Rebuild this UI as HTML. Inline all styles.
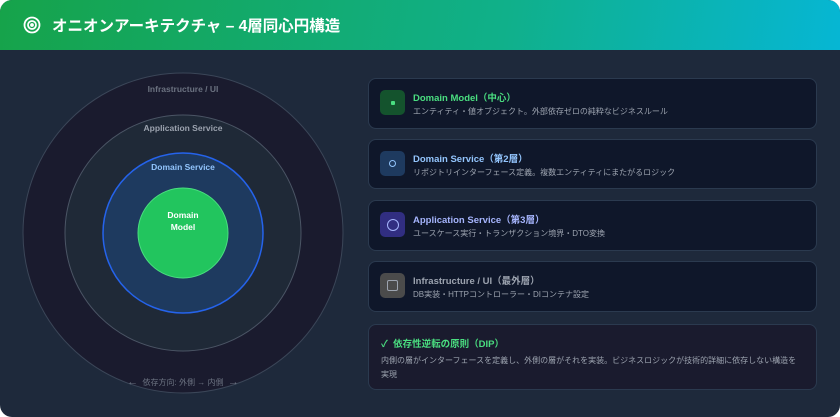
<!DOCTYPE html>
<html><head><meta charset="utf-8"><style>
*{margin:0;padding:0;box-sizing:border-box}
body{width:840px;height:417px;background:#fff;font-family:"Liberation Sans","Noto Sans CJK JP",sans-serif;overflow:hidden}
.wrap{width:840px;height:417px;border-radius:12px;overflow:hidden;background:#1e293b;position:relative}
.hd{height:50px;background:linear-gradient(100deg,#16a34a,#10b08a 60%,#06b6d4);display:flex;align-items:center;padding-left:23px;color:#fff;font-weight:bold;font-size:15.5px}
.hd svg{margin-right:11px}
.card{position:absolute;left:368px;width:449px;background:#0f172a;border:1px solid #2b3a4f;border-radius:8px}
.ic{position:absolute;left:11px;top:11px;width:25px;height:25px;border-radius:5px;display:flex;align-items:center;justify-content:center}
.t{position:absolute;left:44px;top:11px;font-size:9.5px;font-weight:bold}
.d{position:absolute;left:44px;top:27px;font-size:8px;color:#9ca3af}
</style></head><body><div class="wrap">
<div class="hd"><svg width="18" height="18" viewBox="0 0 18 18" fill="none" stroke="#fff" stroke-width="1.8"><circle cx="9" cy="9" r="7.5"/><circle cx="9" cy="9" r="4"/><circle cx="9" cy="9" r="1" fill="#fff"/></svg>オニオンアーキテクチャ – 4層同心円構造</div>
<svg style="position:absolute;left:0;top:0" width="370" height="417">
<circle cx="183" cy="233" r="160" fill="#1a1b2e" stroke="#3b4658" stroke-width="1"/>
<circle cx="183" cy="233" r="118" fill="#1f2937" stroke="#4b5565" stroke-width="1"/>
<circle cx="183" cy="233" r="80" fill="#1e3a5f" stroke="#2563eb" stroke-width="1.5"/>
<circle cx="183" cy="233" r="45" fill="#22c55e" stroke="#4ade80" stroke-width="1"/>
<g font-family="Liberation Sans,Noto Sans CJK JP,sans-serif" font-weight="bold" text-anchor="middle">
<text x="183" y="92" font-size="8.5" fill="#6b7280">Infrastructure / UI</text>
<text x="183" y="131" font-size="8.5" fill="#9ca3af">Application Service</text>
<text x="183" y="170" font-size="8.5" fill="#93c5fd">Domain Service</text>
<text x="183" y="218" font-size="8.5" fill="#fff">Domain</text>
<text x="183" y="230" font-size="8.5" fill="#fff">Model</text>
<text x="183" y="385" font-size="8" font-weight="normal" fill="#6b7280"><tspan font-size="11">←</tspan>&#160;&#160;依存方向: 外側 → 内側&#160;&#160;<tspan font-size="11">→</tspan></text>
</g></svg>
<div class="card" style="top:78px;height:51px"><div class="ic" style="background:#14532d"><div style="width:4px;height:4px;background:#4ade80;border-radius:1px"></div></div><div class="t" style="color:#4ade80">Domain Model（中心）</div><div class="d">エンティティ・値オブジェクト。外部依存ゼロの純粋なビジネスルール</div></div>
<div class="card" style="top:139px;height:50px"><div class="ic" style="background:#1e3a5f"><div style="width:7px;height:7px;border:1px solid #93c5fd;border-radius:50%"></div></div><div class="t" style="color:#93c5fd">Domain Service（第2層）</div><div class="d">リポジトリインターフェース定義。複数エンティティにまたがるロジック</div></div>
<div class="card" style="top:200px;height:51px"><div class="ic" style="background:#312e81"><div style="width:12px;height:12px;border:1px solid #a5b4fc;border-radius:50%"></div></div><div class="t" style="color:#a5b4fc">Application Service（第3層）</div><div class="d">ユースケース実行・トランザクション境界・DTO変換</div></div>
<div class="card" style="top:261px;height:51px"><div class="ic" style="background:#4b4b4b"><div style="width:11px;height:11px;border:1px solid #9ca3af;border-radius:2px"></div></div><div class="t" style="color:#9ca3af">Infrastructure / UI（最外層）</div><div class="d">DB実装・HTTPコントローラー・DIコンテナ設定</div></div>
<div class="card" style="top:324px;height:66px;background:#1a1b2e"><div style="position:absolute;left:12px;top:11px;font-size:9.5px;font-weight:bold;color:#4ade80">✓&#160;&#160;依存性逆転の原則（DIP）</div><div style="position:absolute;left:12px;top:29px;width:422px;font-size:8px;line-height:14px;color:#9ca3af">内側の層がインターフェースを定義し、外側の層がそれを実装。ビジネスロジックが技術的詳細に依存しない構造を実現</div></div>
</div></body></html>
